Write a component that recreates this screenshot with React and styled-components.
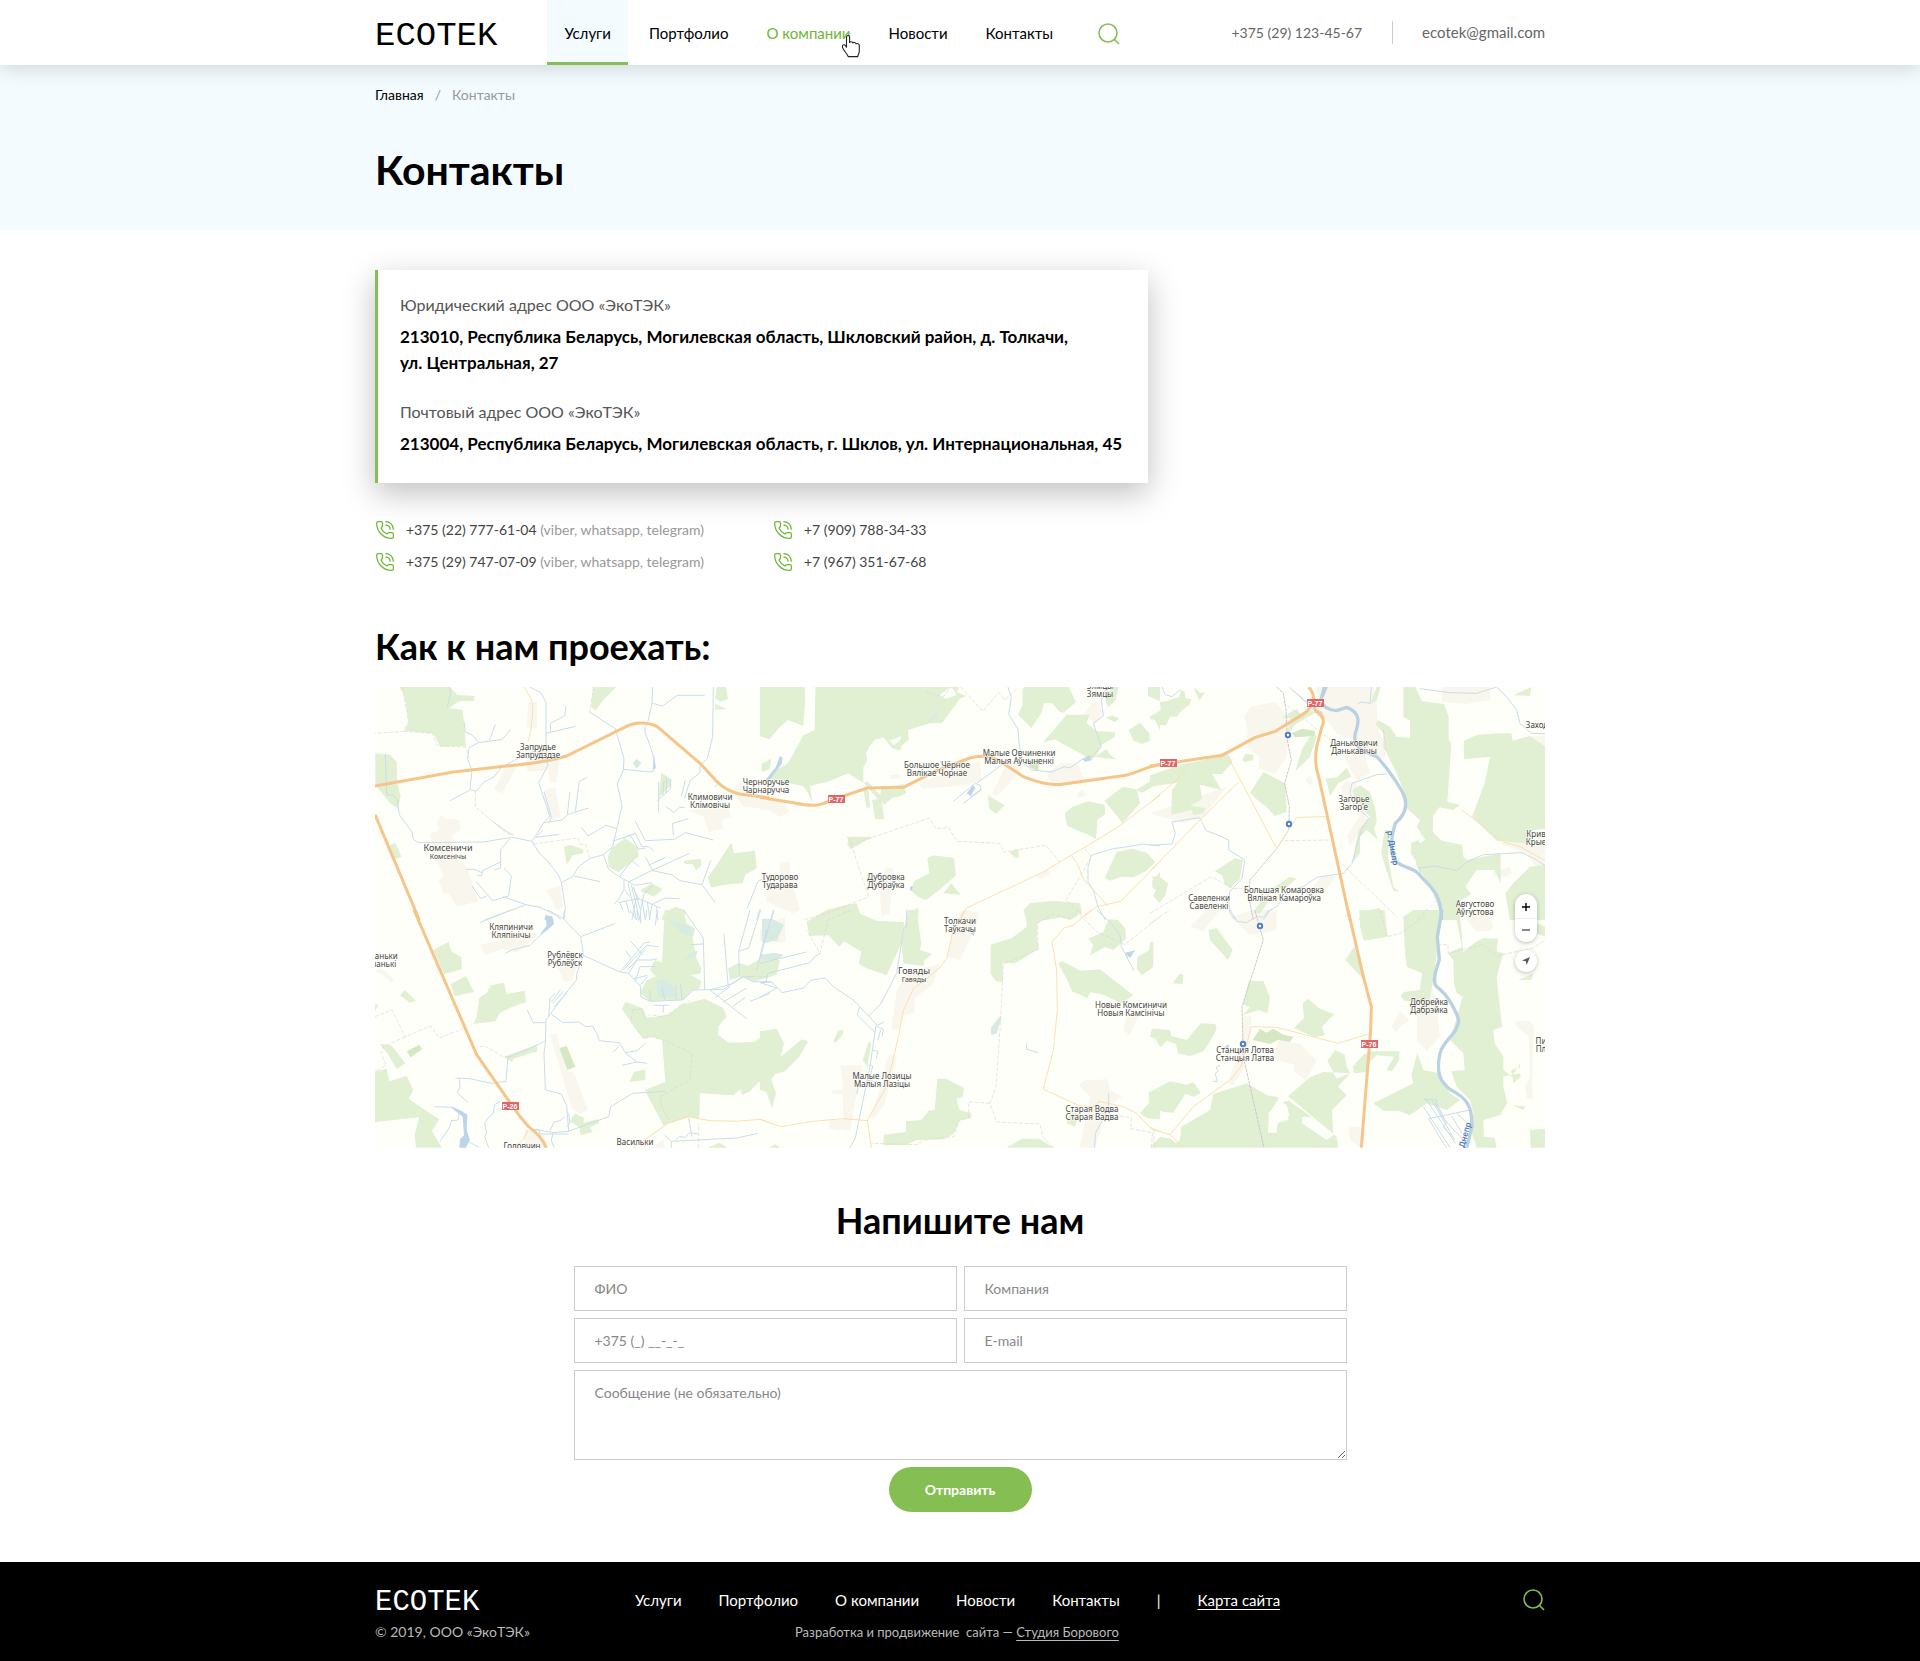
import styled, { createGlobalStyle, css } from "styled-components";
import { PhoneCall } from "lucide-react";

const GlobalStyle = createGlobalStyle`
  body {
    margin: 0;
    font-family: Lato, "Noto Sans", sans-serif;
    font-size: 16px;
    color: #000;
    background-color: #fff;
  }

  * {
    box-sizing: border-box;
  }

  h1, h2, p {
    margin: 0;
  }

  a {
    color: inherit;
    text-decoration: none;
  }
`;

const green = "#85be52";

const Container = styled.div`
  width: 100%;
  max-width: 1210px;
  margin: 0 auto;
  padding: 0 20px;
`;

const Header = styled.header`
  position: relative;
  z-index: 1;
  background-color: #fff;
  box-shadow: 0 4px 18px rgba(0, 0, 0, 0.14);
`;

const HeaderRow = styled(Container)`
  display: flex;
  align-items: center;
  height: 65px;
`;

const Logo = styled.a`
  padding-top: 6px;
  font-family: "Liberation Mono", monospace;
  font-size: ${({ $small }) => ($small ? "29px" : "34px")};
  line-height: 26px;
`;

const MainNav = styled.nav`
  display: flex;
  align-self: stretch;
  gap: 4px;
  margin-left: 50px;
  font-size: 15px;
`;

const NavLink = styled.a`
  position: relative;
  display: flex;
  align-items: center;
  padding: 3px 17px 0;
  border-bottom: 3px solid transparent;
  ${({ $active }) =>
    $active &&
    css`
      background-color: #f3fbff;
      border-color: ${green};
    `}
  ${({ $hovered }) => $hovered && "color: #6fb536;"}
`;

const Pointer = styled.svg`
  position: absolute;
  top: 34px;
  right: 7px;
`;

const IconButton = styled.button`
  display: flex;
  padding: 0;
  border: 0;
  background: none;
  color: ${green};
  cursor: pointer;
`;

const HeaderSearch = styled.div`
  margin: 2px 0 0 28px;
`;

const HeaderContacts = styled.div`
  display: flex;
  align-items: center;
  margin-left: auto;
  font-size: 14px;
  line-height: 23px;
  color: #666;

  a + a {
    margin-left: 30px;
    padding-left: 29px;
    border-left: 1px solid #ccc;
    font-size: 15px;
  }
`;

const Hero = styled.section`
  background-color: #f3fbff;
`;

const HeroInner = styled(Container)`
  padding-top: 20px;
  padding-bottom: 30px;
`;

const Breadcrumbs = styled.nav`
  display: flex;
  gap: 11px;
  font-size: 14px;
  line-height: 20px;

  span {
    color: #999;
  }
`;

const Title = styled.h1`
  margin-top: 35px;
  font-size: 41px;
  line-height: 60px;
  font-weight: 700;
`;

const Subtitle = styled.h2`
  font-size: 36px;
  line-height: 44px;
  font-weight: 700;
`;

const Card = styled.section`
  max-width: 773px;
  margin-top: 40px;
  padding: 22px 22px 26px;
  border-left: 3px solid ${green};
  background-color: #fff;
  box-shadow: 0 10px 30px rgba(0, 0, 0, 0.25);
`;

const Address = styled.div`
  line-height: 26px;

  & + & {
    margin-top: 23px;
  }

  span {
    display: block;
    color: #555;
  }

  p {
    margin-top: 6px;
    font-size: 17px;
    font-weight: 700;
  }
`;

const Phones = styled.ul`
  display: grid;
  grid-template-columns: 398px auto;
  justify-content: start;
  row-gap: 8px;
  margin: 35px 0 0;
  padding: 0;
  list-style: none;

  li {
    display: flex;
    align-items: center;
    gap: 11px;
    font-size: 14px;
    line-height: 24px;
    color: #444;
  }

  svg {
    color: #6fb536;
  }

  span {
    color: #999;
  }
`;

const Route = styled.section`
  margin-top: 50px;
`;

const MapFrame = styled.div`
  position: relative;
  height: 461px;
  margin-top: 19px;
  overflow: hidden;
  background-color: #fffffa;
`;

const MapSvg = styled.svg`
  display: block;
  width: 100%;
  height: 100%;
`;

const MapControls = styled.div`
  position: absolute;
  top: 207px;
  right: 8px;
  display: flex;
  flex-direction: column;
  gap: 8px;
`;

const ControlGroup = styled.div`
  display: flex;
  flex-direction: column;
  width: 22px;
  padding: ${({ $single }) => ($single ? "0" : "2px 0")};
  border-radius: 11px;
  background-color: #fff;
  box-shadow: 0 1px 4px rgba(0, 0, 0, 0.25);

  button {
    display: flex;
    align-items: center;
    justify-content: center;
    height: 22px;
    padding: 0;
    border: 0;
    background: none;
  }

  button + button {
    border-top: 1px solid #eee;
  }
`;

const Feedback = styled.section`
  display: flex;
  flex-direction: column;
  align-items: center;
  margin-top: 50px;
  padding-bottom: 50px;
`;

const Form = styled.form`
  display: grid;
  grid-template-columns: 1fr 1fr;
  gap: 7px;
  justify-items: stretch;
  width: 100%;
  max-width: 773px;
  margin-top: 24px;
`;

const fieldStyle = css`
  width: 100%;
  padding: 0 20px;
  border: 1px solid #ccc;
  border-radius: 0;
  background-color: #fff;
  font-family: inherit;
  font-size: 14px;

  &::placeholder {
    color: #888;
    opacity: 1;
  }
`;

const Field = styled.input`
  ${fieldStyle}
  height: 45px;
`;

const Message = styled.textarea`
  ${fieldStyle}
  display: block;
  grid-column: 1 / -1;
  height: 90px;
  padding-top: 12px;
  line-height: 20px;
  resize: vertical;
`;

const Submit = styled.button`
  grid-column: 1 / -1;
  justify-self: center;
  width: 143px;
  height: 45px;
  border: 0;
  border-radius: 23px;
  background-color: ${green};
  color: #fff;
  font-family: inherit;
  font-size: 14px;
  font-weight: 700;
  cursor: pointer;
`;

const Footer = styled.footer`
  background-color: #000;
  color: #fff;
`;

const FooterGrid = styled(Container)`
  display: grid;
  grid-template-columns: 260px 1fr auto;
  align-items: center;
  row-gap: 4px;
  padding-top: 22px;
  padding-bottom: 18px;
`;

const FooterNav = styled.nav`
  display: flex;
  gap: 37px;
  font-size: 15px;
`;

const Underlined = styled.a`
  text-decoration: underline;
  text-underline-offset: 3px;
`;

const Copyright = styled.p`
  font-size: 14px;
  line-height: 24px;
  color: #bbb;
`;

const Credits = styled(Copyright)`
  padding-left: 160px;
  font-size: 13px;
  white-space: pre;
`;

const SearchIcon = () => (
  <svg width="22" height="22" viewBox="0 0 22 22" fill="none" stroke="currentColor" strokeWidth="1.6">
    <circle cx="10" cy="10" r="9" />
    <path d="M16 16l5 5" />
  </svg>
);

const PointerIcon = () => (
  <Pointer width="20" height="24" viewBox="0 0 20 24" aria-hidden="true">
    <path
      d="M5.5 3.2C5.5 1 8.6 1 8.6 3.2V8.5C9 7.3 11.6 7.5 11.8 9C12.6 8 14.8 8.3 15 9.9C16.2 9.1 18.3 9.6 18.3 11.6V17C18.3 20 16.8 20.5 16.8 22.6H7.2C6.5 20 1.4 15.5 1.4 12.4C1.4 10.4 3.6 10.3 4.4 11.7L5.5 13.2Z"
      fill="#fff"
      stroke="#222"
      strokeWidth="1.1"
      strokeLinejoin="round"
    />
  </Pointer>
);

// Each tile is drawn at three times its size and placed by its top left corner
const tiles = [
  {
    x: -5,
    y: -7,
    wood: "M88 21H240L262 45L314 48L312 62L268 64L236 85L278 90L288 198L210 200L196 170L188 160L104 152L116 128L108 70L100 40Z M16 220L60 224L80 245L82 310L92 350L84 386L60 370L16 314Z M56 498L76 488L94 530L70 540Z M670 21H738L700 60L676 92L664 82Z M1040 21H1068L1074 58L1050 65L1035 55Z M1036 72L1070 86L1036 90Z M1174 272L1200 236V266L1180 276Z M874 278L904 298L902 318L866 352Z M582 500L600 495L640 508V520L608 526L590 554Z M724 505L765 475L802 500L806 530L745 576L716 560L714 530Z M942 542L992 536L994 558L978 570L968 552L944 552Z M1036 560L1084 488L1092 520L1155 512L1160 565L1126 584L1118 610L1080 612L1022 622L1014 592Z M810 632L845 610L878 628L852 650Z M875 720L880 702L915 680L944 690V720Z",
    built: "M475 66H502L500 144H470Z M372 328L410 255L440 262L396 342Z M470 195L540 205L568 250L558 308L538 304L536 270L472 275Z M522 330L556 322L572 410L540 424Z M180 462L206 450L200 430L212 405L226 416L268 420L272 450L248 462L250 530L290 560L326 664L262 680L235 640H220L206 600L220 590L200 540Z M950 390L1075 385L1085 412L1055 420L1060 446L1016 456L1000 410Z M1085 330L1110 306L1160 340L1200 350V388L1120 380Z M526 630L570 618L580 682L560 690L540 650Z",
    water: "M788 250L800 236L814 250L800 266Z",
    lake: "M848 268L852 225L858 265Z M524 712L545 708L550 720H524Z",
    stream: "M238 21L242 40L232 80 M282 124L286 156L308 166L326 188L298 202L292 236L306 270L300 328L318 334L342 306L370 292L395 262L450 232L492 214 M326 188L397 178L422 148 M358 182L376 134 M240 362L300 330 M480 21L512 38L528 66V240L534 256L506 308L540 410L524 424L486 484L508 520L530 540L566 586L574 608L586 682L582 720 M528 160L617 139 M541 156V130L584 108L588 78 M46 224L50 344L70 346L82 360L88 404L126 456L130 478L145 488L340 486L425 472L486 484 M368 425L428 466 M420 476L392 508V546L338 572L334 588L322 586 M290 568L314 568L336 578 M306 618L332 656L350 648 M318 604L368 662L416 648L424 588L402 564 M392 546V564L372 570 M344 720L468 674L400 650 M468 674L510 682L560 706L572 720 M522 336L544 410L538 428 M524 428L576 420L592 404L600 336 M592 404L656 384 M616 394L628 304L652 292 M498 472L568 463 M518 450L498 472 M658 96L736 146L762 236L760 270L742 312L756 378L742 440L728 500L700 524L658 536L626 560L608 590L574 608 M612 588L690 605 M848 21L846 70L834 124L824 142L826 160L840 196L852 236L852 272L842 276L762 268 M846 70L878 78L922 46H1004 M1030 21L1028 170L1012 235L990 258V278L960 302L944 354 M946 300L934 350 M866 306V358L866 398 M862 362L902 326V296 M878 345L882 304 M888 340L890 296 M888 380L912 398L928 382L944 382 M634 442L654 468L708 436L740 446 M795 422L826 482L912 478L946 458L1030 480 M910 466L908 430L956 416 M1042 312L1034 322 M728 484L796 460L816 500L838 500L852 514 M760 476L780 464L806 508L826 504 M700 524L716 568L748 590L794 616L846 608 M776 606L836 576L958 520 M748 590L786 542L808 560 M826 530L848 572L906 584L930 602L996 614L1022 542 M836 556L886 532 M996 614L1036 668 M762 600V628L746 658L734 672 M774 610L800 720 M784 615L810 720 M762 628L780 650 M790 620L812 690L822 640L846 618 M744 668L806 656L872 684 M844 674L886 654L928 656 M798 656L786 720 M816 660L826 720 M832 666L840 720 M846 674L838 720 M860 680L864 720 M790 625L808 660 M750 668L758 690 M768 664L778 700 M1132 684L1164 604L1176 598 M1160 720L1170 688",
    border: "M100 21V40L116 125L100 154L15 160 M100 154L188 160L200 196L288 202L298 235 M670 21L660 96 M316 334V380L410 460L430 465 M490 492L625 474L630 492L648 494L658 534",
    minor: "M462 21C480 50 490 60 488 90C486 130 482 160 474 185",
    main: "M15 318L250 276L390 260C450 254 520 250 590 228L768 140C800 122 840 128 862 140L990 250L1040 304Q1070 334 1110 342L1200 354 M15 404L148 720",
  },
  {
    x: -5,
    y: 223,
    wood: "M190 120L236 95L244 124L274 142L275 178L222 192Z M242 222L288 198L312 246L254 258Z M90 256L104 240L138 272L120 278Z M328 264L350 248L364 226L402 218L410 252L464 242L468 276L424 292L390 308L376 334L310 342L320 320Z M15 282L26 284L15 304Z M30 402L64 406L106 460L80 478L56 436Z M15 484L50 476L58 514L110 498L130 540L116 566L150 590L208 628L186 664L216 713H138L134 674L148 622L15 636Z M402 440L500 404L502 424L430 446L426 456L416 450Z M600 634L616 610L642 624L640 638L684 628L688 638L660 652L668 666L632 676L628 652Z M778 516L792 486L826 478V510Z M884 0H940L950 40L976 56L968 84L978 140L994 176L990 192L962 194L994 214L990 234L960 246L940 270H890L840 274L810 250L830 210L858 200L840 180L854 150L876 158Z M1074 176L1106 158L1134 168L1170 146H1200V200L1150 216L1120 198L1080 210Z M756 298L766 276L790 284L820 296L830 324L894 314L934 284L1004 266L1060 294L1070 320L1046 348L1044 374L1076 398L1150 396L1200 366V520L1166 516L1140 544L1116 556L1112 538L1090 556L990 550L988 626L960 620L900 640L880 646L824 540L886 516L876 390L846 380L820 386Z M1176 516L1200 510V556Z M1012 713L1050 698L1072 713Z",
    shade: "M110 424L148 404L156 418L122 442Z M568 414L590 408L616 470L592 480Z",
    built: "M330 104L500 68L500 80L440 128L400 116L345 136Z M562 170L622 166L606 210L584 216Z M15 184L30 174L44 182L72 208L64 218L40 196Z M540 374L560 370L570 410L590 480L612 490L654 600L630 612L606 596Z M464 656L520 670L536 713H464Z M845 713L880 688L884 713Z",
    water: "M894 28L960 50L970 80L940 72Z M942 152L962 128L982 122L980 136Z M860 210L880 208L912 230V262H864Z M1176 26H1200V96L1178 100Z",
    lake: "M526 14L548 22L552 42L532 60L510 74L530 46Z M240 590L270 600L292 614L290 660L300 690L288 713H268L270 688L282 676L278 620Z",
    stream: "M330 38L424 0 M534 0L580 26 M584 0L580 26L632 80L638 116L640 136L620 190V210L590 246L528 330L526 400L522 430L526 540L574 552L590 586L596 664L550 668L506 660L488 660 M632 80L706 52L736 40 M406 130L426 120L480 106L500 86L530 60 M640 136L750 186L776 190L812 230V260L840 274L938 270L970 240L1060 238L1114 202L1150 200 M1020 240L1090 220L1120 200L1150 216L1200 214 M1020 240L1130 326 M1036 262L1080 230 M1060 276L1130 234 M1090 288L1126 262 M1140 274L1200 250 M940 0L1000 84L1004 240 M962 104L1000 102 M1062 72L1074 222 M1140 0L1106 124L1108 196 M1172 0L1136 114L1106 124 M1190 60L1160 180 M780 92L818 134 M768 122L784 146 M750 186L824 98L840 96 M760 180L830 106L866 110 M776 190L814 130L826 118 M796 214L810 170L856 170 M772 180L800 150L846 150L862 146 M812 224L832 200 M790 206L832 196 M580 244L548 280 M572 238L544 276 M590 250L552 290 M536 320L540 264L556 250 M528 338H490L472 300 M544 312L578 338L626 336L648 350L668 348L684 378L688 392L748 398L766 428L802 422L828 398 M766 428L800 456L832 460 M748 408L730 426 M800 456L756 466 M840 270V242 M880 288V308 M850 286H896 M884 270L876 230 M918 270V226 M936 270L932 222 M256 504L300 506L364 520L408 514L414 442L470 420L524 394 M268 506L270 530L262 548L294 578 M194 590L250 592L272 604 M268 604L264 630L244 632L240 650L210 694 M390 574L374 584L370 610L354 624L344 640L350 670L344 680L356 713 M298 696L328 713 M596 664L660 640L716 620L722 590L788 550L886 544 M590 650L600 640L596 610 M584 620L570 632L552 636L540 662 M550 668L544 690L552 713 M486 660L506 658L510 672H596 M956 624L966 680 M904 694L884 676 M904 694V713 M904 694L1100 684L1164 670 M916 690L928 680L946 682L958 668L984 672 M780 0L800 30 M800 0L806 34 M812 0V40 M862 0L856 46 M830 0L828 24",
    border: "M15 320L66 300L106 380L182 348L208 384L280 356 M106 380L40 410L34 430L48 466L15 484 M312 412L346 408L402 442L420 438 M788 300L814 296L824 326L840 314L876 320L894 314L934 284L960 272 M788 300L782 336L820 384L846 380L886 392L966 430L960 510L870 560L876 594L896 630 M986 713V640 M1114 200H1200",
    minor: "M474 660L460 690L428 713 M790 713L900 636L956 620L1020 632L1100 634L1170 628L1200 638",
    main: "M132 0L320 434L430 592Q450 622 476 650C500 668 520 690 528 713",
  },
  {
    x: 385,
    y: -7,
    wood: "M0 21H134L136 56L130 138L84 120L60 140L28 178L0 168Z M166 21H598L590 36L618 48L600 56L546 130L510 130L444 150L446 180L426 196L420 212L396 204L370 172L344 180L328 200L318 220L322 242L310 262V308L264 280L208 304L150 318L158 368L144 340L130 318L86 310L48 300L24 296L44 272L84 250L108 206L130 166L164 150Z M312 310L322 304L364 350L372 418H346L336 360L354 358Z M310 328L320 384L330 382L326 332Z M364 322L432 312L438 340L414 352L400 352L372 374L360 350Z M6 250L34 236L32 256L12 276L4 270Z M266 470L338 470L272 508L262 494Z M684 346L734 376L708 402L688 386Z M502 534L520 526L582 534L588 586L538 630L498 660L474 650L454 632L462 604L508 580Z M550 640L574 610L602 644Z M246 652L256 676L290 670L306 720H150L200 690L256 676Z M444 700L474 684L474 720H444Z M788 30L792 21H926L948 66L910 98L900 96L876 70H852L844 100L814 144L774 104L788 76Z M920 104L988 104L980 130L1010 154L1066 156L1064 170L1024 196L1010 224L990 246L972 226L920 198L884 178L848 188Z M1004 230L1040 208L1050 224L1070 238L1046 236Z M1034 54L1058 21H1076L1066 62L1044 82Z M1164 21H1200V64L1164 48Z M1106 150L1140 128L1168 160L1170 182L1146 192L1120 182Z M1186 122L1200 112V150Z M914 400L938 380L984 364L1034 374L1036 402L1012 420L1008 478L988 466L922 438Z M1034 362L1088 320L1130 328L1140 370L1088 430Z M1128 330L1200 286V308L1146 338Z M748 516L776 508V534L764 532Z M790 690L810 670L880 662L960 670L966 700L860 720H800Z M1034 594L1070 516L1118 506L1160 518L1186 546L1160 572L1120 592L1084 590L1050 602Z M1176 604L1200 576V636L1178 624Z M1038 114L1056 106L1078 116L1064 126Z",
    clear: "M390 182L424 168L420 182L400 196Z M536 46L574 21L590 44L560 56Z",
    shade: "M806 240L840 236L834 272L808 262Z",
    built: "M476 310L540 286L660 242L664 300L620 316L490 326Z M740 250L800 250L720 340L708 350L696 340Z M860 280L900 250L950 250L980 306L900 318L870 306Z M0 345L70 360L90 394L60 412L24 390L0 388Z M58 550L88 544L94 602L112 660L120 690L98 700L40 676L20 664L24 610L60 600Z M374 566L400 562L390 700L364 710L360 640Z M828 590L862 566L872 584L840 598Z M970 104L1004 60L1024 80L1020 120L1004 130Z M950 340L970 328L976 348L956 354Z M388 286L422 282L418 298H392Z M596 696L620 690L660 700L640 720H600Z",
    water: "M504 122L534 94L530 108L514 126Z",
    lake: "M620 340L640 316L646 324L632 348Z M60 228L68 234L66 250L40 286L24 306L18 298L48 260Z M450 620L458 618L456 632L450 630Z M968 236L990 226L992 240L976 246Z",
    stream: "M744 21L754 54L746 102L774 148L778 200L790 250L816 270L876 276L912 260L930 264L966 238L990 236L1024 200L1012 164L1000 130L1030 108L1024 60L1040 21 M580 364L646 310L660 316L664 330L610 370 M650 310L732 250 M630 352L664 328 M1200 498L1150 492L1104 500L1060 506L1020 518L994 526L984 560V606L1000 630L1014 680L1036 720 M34 720L42 692",
    border: "M498 36L550 50L574 21 M602 21L668 94L716 38L734 60L770 28 M274 494L508 414L528 446L566 442L590 484L720 490L730 516L858 496L900 546 M274 494L326 650L200 700L130 720 M974 506L994 530L918 660L980 716 M262 470L274 494",
    minor: "M600 720L620 684L850 576L1070 444L1200 346 M934 526L952 552L972 600L1044 678 M1200 544L1082 664L1010 680L958 720",
    main: "M0 352L100 368C160 380 180 378 210 362L322 324L430 322L530 272L630 234C670 222 700 232 720 244L790 290C850 314 880 316 912 312L1098 286C1150 270 1170 256 1200 254",
  },
  {
    x: 385,
    y: 223,
    wood: "M140 34L238 0H274L350 32L432 36L424 100L380 196L318 174L296 162L304 126L252 94L238 110L206 76L148 78Z M444 0H476L474 34L484 100L480 120L516 132L494 150L490 168L430 160L424 100Z M796 0H964L950 20L930 30L878 14L832 40L830 80L836 116L766 160L728 158V216L708 214L692 192V104L756 84L800 50Z M0 152L60 150L50 194L0 210Z M0 364L50 356L72 400L62 440L126 388L144 394L118 440L74 484L46 492L34 508L48 550L36 596L20 546L0 540Z M220 394L234 362L250 360L248 376L226 398Z M326 396L334 400L322 472L308 450Z M532 506L558 506L612 534L608 560L590 568L598 600L634 610L634 624L600 630L580 672L550 688L470 690L440 704L370 706L372 674L438 666V634L484 630L506 602L524 600Z M740 713L786 686H838L880 713Z M30 713L44 702L62 713Z M894 160L908 154L960 182L1020 178L1120 256L1084 280L1034 256L992 246L982 264L936 244L920 206Z M984 86L1030 66L1046 28L1074 30L1096 56L1098 86L1060 120L1034 112L990 136L1000 104Z M1132 140L1166 122L1172 94L1180 170L1146 196L1130 176Z M920 640L930 606L958 612L944 650Z M1140 610L1166 580V546L1200 548V628L1160 624Z M1174 362L1200 356V408L1186 382Z",
    built: "M590 30L610 0L656 14L650 46L600 150L564 140L574 80Z M410 240L440 190L540 160L520 220L464 266V310L430 316L416 360L394 356Z M240 466L306 466L308 500L290 550L270 664L206 656L210 630H250L248 554L216 550V542L250 538Z M384 436L412 436L374 580L346 620L328 628L366 520Z M956 524L976 510L1044 508L1050 540L1086 560L1060 580L1030 600L1020 670L1004 713H960L976 626L990 560Z M1090 360L1100 320L1136 318L1108 378Z M20 40L76 20L76 96L0 94V60Z",
    water: "M692 354L722 316L724 326L710 370L694 376Z M6 40L34 26L72 44L50 92L6 94Z M0 134L44 128L72 134L50 150L0 150Z",
    lake: "M1096 130L1126 120L1110 144Z M630 68L646 66L640 78Z",
    stream: "M40 0L0 146 M0 160L140 126 M0 218L50 234L0 262 M66 248L36 216L0 218 M18 216L24 190L150 158L164 140L180 130 M66 248L130 234L154 210L196 204L220 230L280 270L352 346L372 336 M298 292L292 314L344 366 M326 318L362 282L410 190L432 50L440 50 M352 350L370 358L366 380 M362 360L354 390 M348 346L330 470L286 684L270 713 M336 420L354 424L348 448 M326 464L338 468L330 500 M300 510L290 552 M318 510L352 516 M440 0V50 M800 400V418L834 428 M1010 0L1054 40L1080 76L1084 110L1104 148L1122 182 M1104 148L1098 128L1120 126 M1046 550V596L1006 670L1004 713",
    border: "M274 0L204 30L180 130L140 60 M958 0L930 26L880 12L832 40L834 118L730 162L722 330L708 530L690 580L710 636L840 642L848 680L880 713 M690 580L626 576L626 624L596 632L582 680L490 690L470 704L334 700 M958 14L1010 64L1094 104L1200 20 M1012 610L1114 622L1112 656L1178 668L1174 713",
    minor: "M614 0L580 60L560 146L540 172L500 206L460 236L430 302L418 368L392 480L376 536L322 630L334 713 M0 628L62 650L160 634L248 626L322 632 M992 0L940 46L912 54L876 96L890 180L892 300L880 420L850 538L960 588L1008 590L1016 574L1090 590L1130 610L1170 652L1200 664",
    main: "",
  },
  {
    x: 775,
    y: -7,
    wood: "M0 110L32 90L30 66L50 64L88 50L92 28L104 36L106 54L124 58L118 74L90 96L82 110H60L48 136L28 134L20 120L0 118Z M130 21L152 40L166 36L148 62Z M0 286L100 252L122 248L196 232L228 214L248 246L216 282H186L214 330L150 314L156 358L120 378L166 384L160 400L130 406L124 390L64 404L66 330L82 308L0 320Z M276 240L286 222L310 224V240L286 246Z M300 338L340 276L374 294L406 310L410 396L374 408L350 380L326 364Z M6 590L26 588L54 610L48 642L28 670L10 648L20 624Z M194 574L256 534L278 540L270 596L242 624L224 612L216 586Z M412 168L420 114L396 112L440 86L450 100L474 90L500 96L434 134Z M436 274L456 208L490 152L500 170L480 230Z M526 296L560 292L590 264L604 290L566 308L540 348L532 312Z M608 330L630 316L660 336L676 386L680 426L672 446L684 480L650 450L630 470V520L606 550L626 450L660 410L620 370Z M680 21H692L680 62L660 72Z M760 21H796L810 50L816 64L882 72L896 110V180L904 190L892 366L930 374L910 390L868 382L850 408L848 456L876 482L936 494L940 530L952 540L1052 520V610L1034 570H980L946 620L964 642L930 664L926 720H880L840 616L800 560L790 500L826 480L800 440L810 420L772 386L760 330L740 280L700 200V160L676 132L684 120L720 140L740 170L780 174V122L760 110Z M784 488L806 480L812 528L796 540L782 520Z M704 450L718 452L714 530L730 620L748 636L730 632L706 560L694 520Z M942 182L982 164L1048 160H1084L1088 182L1140 168L1200 210V446L1150 450L1130 490L1040 482L966 410L1004 310L1020 230L942 238Z M1090 46L1144 21L1140 48Z M1090 610L1140 560L1200 552V720H1080L1066 640Z M630 712L660 690L690 684L694 720H626Z M370 624L420 590L440 596L410 620L368 632L356 640L352 670L330 700L312 700L320 680Z",
    shade: "M426 160L456 146L494 152L492 168L434 172Z",
    built: "M282 110L300 80L376 66L420 120L410 230L376 280L326 266L328 230L288 200L290 140Z M500 21L670 21L680 70L684 150L706 200L696 238L650 224L610 180L560 160L512 100Z M570 210L600 230L640 210L660 280L620 302Z M590 300L620 310L620 360L580 370L574 320Z M876 21H1020V60L950 72L876 66Z M1136 170L1200 166V260L1156 262V206L1134 196Z M1056 494L1060 480L1200 480V560L1160 566L1130 520Z M466 296L482 286L488 310L476 318Z M466 640L500 610L510 590L560 588L520 640L486 660Z M1030 574L1080 560L1086 580L1070 590L1030 588Z M0 400L230 320L160 410L100 430Z M640 390L650 420L600 500L590 470Z",
    water: "",
    lake: "M518 21H534L522 50L510 58Z",
    stream: "M36 21L46 44L66 50L90 30 M0 496L66 492L76 460L66 426L140 414L150 414L168 452L196 462L236 480V510L284 540L276 596L240 634L236 660L240 700L256 720 M418 21L460 60L520 120 M426 30L474 68L520 100 M664 21L660 70L634 66L624 72 M600 338L606 310L680 284L710 282 M600 338L612 376L656 414L634 450L606 550L580 580L500 592L460 620L420 630L380 680L360 690L340 720 M810 26L900 38L980 40L1040 21L1070 50L1100 90L1110 130L1144 160L1200 162 M816 594L806 564L856 558L920 572L950 546L1000 524L1116 518L1160 540L1200 566",
    border: "M400 66L540 180 M404 482L540 480 M564 542L652 624L740 710 M0 700L184 590L250 626H330 M700 150L708 200L700 236 M860 660L800 720",
    rail: "M380 21L400 40L408 90L412 180L424 240L404 310L418 380L416 450L380 506L300 600L296 650L310 720",
    minor: "M230 230L250 260L380 506L440 412L528 410 M0 368L80 300L120 250 M0 574L150 420L266 306 M936 390L1000 440L1060 486L1110 500L1200 550",
    river: "M524 21L512 60Q522 90 560 92L590 82C640 100 622 140 616 160C604 210 660 220 680 230C710 260 750 320 760 342Q782 390 736 430C730 450 716 500 730 530C740 560 780 560 800 576C840 620 876 640 874 720",
    main: "M476 21Q510 60 464 100L376 154L316 172L216 226L0 258 M490 60L496 92Q530 110 516 140L500 200Q492 250 506 290L600 720",
  },
  {
    x: 775,
    y: 223,
    wood: "M0 96L10 96L10 160L0 180Z M176 60L200 54L248 120L234 150L180 90Z M68 220L90 190L100 196L98 222Z M6 356L60 360L64 378L110 390L152 340L196 342L200 358L178 398L160 424L120 438L84 430L78 402L50 392L32 412L14 384L0 380Z M278 316L300 290L280 284L296 214L340 212L360 262L352 310L326 300Z M458 280L474 266L510 296L552 312L516 350L524 376L494 382L432 354L462 324Z M532 452L556 420L584 434L590 470L600 490L560 506Z M0 546L60 514L110 524L130 516L152 548L132 560L106 552L70 608L40 606L0 590Z M190 552L290 520L352 556L386 562L380 576L358 610L354 668H380L382 640L416 628L400 576L416 572L486 622L456 620V640L530 690L550 676L546 600L590 556L564 530L600 490L520 486L480 502L414 558L560 680L566 713H60L90 690L94 650L180 600Z M586 150L612 110L640 180L648 216Z M628 0H704L712 80L642 92L630 50Z M760 20L790 0H876L870 60L862 120L850 210L836 280L764 272L752 258L762 246L810 240L816 190L770 170L764 110Z M608 470L640 434L660 424L748 424V450L726 484L710 480L732 440L680 436L662 452L652 486L612 490Z M670 580L790 520L784 496L802 430L820 480L870 490L900 550L930 570L890 600L830 580L780 616L750 604L700 602Z M914 0L936 110L894 130L910 150L912 220L920 250L938 260L900 390L940 430L944 480L904 484L920 530L960 570L970 610L962 660L980 713H1040L1034 684L1002 680L1000 630L1050 616L1072 580L1060 530V500L1110 490V460L1086 500L1060 480V440L1034 400L1030 360L1056 350L1040 200L1060 130L1040 124L1044 86L1000 84L972 100L940 126L930 20L970 0Z M1084 480L1108 470L1112 500L1090 520Z M1104 210L1150 190L1144 210Z M1140 660L1200 656V713H1142Z M1088 586L1128 590L1118 600Z M1160 40L1200 56V86L1160 70Z M0 713L30 680L62 686L96 713Z",
    clear: "M384 580L410 584L418 618L384 634L380 660L356 666V610Z",
    shade: "M308 390L330 356L350 368L370 356L400 374L430 380L420 396L384 390L360 402Z",
    built: "M278 320L304 316L300 400L280 480L250 524L234 520L260 440L274 400Z M384 392L448 400L500 452L466 514L430 480L434 464L370 448Z M724 350L750 304L780 330L750 350L740 368Z M800 300L840 220L858 262L870 380L830 424L800 390Z M1094 334L1140 332L1152 350L1146 520L1150 570L1130 566L1124 530L1140 500L1136 380L1100 350Z M596 650L634 650L630 713L600 690Z M120 50L170 0H210L160 64Z M240 20L310 0H380V60L300 76Z M930 0H1020L1030 60L980 66Z M120 690L150 664L190 660L188 690Z",
    water: "",
    lake: "M222 412L236 402L236 418L224 418Z",
    stream: "M240 0L262 34L290 38L320 20L340 22L356 0 M210 466L198 472L204 484L196 490L198 500L202 514L190 514 M820 568L862 570L856 580L880 625 M820 590L900 713 M830 570L916 700 M846 572L914 690 M836 626L960 600 M880 626L950 700 M836 626L880 700L890 713 M904 616L936 670 M920 610L952 640 M860 580L890 640L880 650L906 680",
    border: "M690 0L712 80L750 70L830 14 M862 104H894V130L1000 104L1040 138L1150 114L1200 80 M0 40L60 0 M12 660V713",
    rail: "M314 0L340 90L276 290L280 440L342 713",
    minor: "M0 656L60 674L100 713 M60 674L130 590L240 510L274 468L280 440L304 350L380 352L564 400L656 372",
    river: "M876 0L862 80L868 150C850 200 850 220 860 230C900 260 920 310 926 330C926 370 880 390 870 430C854 500 880 530 920 550C970 580 964 620 966 650L950 713",
    main: "M594 0L640 200L664 290L662 360L634 713",
  },
];

const layers = [
  { key: "built", fill: "#f9f6ee" },
  { key: "wood", fill: "#e1efd2" },
  { key: "clear", fill: "#fffffa" },
  { key: "shade", fill: "#d5e7c3" },
  { key: "water", fill: "#d8eae4" },
  { key: "lake", fill: "#bcd6e8" },
  { key: "stream", stroke: "#c9dde9", width: 3 },
  { key: "border", stroke: "#dcd6d2", width: 2, dash: "12 5" },
  { key: "river", stroke: "#b9d2e2", width: 10 },
  { key: "rail", stroke: "#c9c9c9", width: 3, dash: "10 2" },
  { key: "minor", stroke: "#fae0b3", width: 3 },
  { key: "main", stroke: "#f5c58a", width: 9 },
];

const places = [
  [163, 63, "Запрудье", "Запрудздзе"],
  [73, 164, "Комсеничи", "Комсенічы", 9],
  [335, 113, "Климовичи", "Клімовічы"],
  [391, 98, "Черноручье", "Чарнаручча"],
  [562, 81, "Большое Чёрное", "Вялікае Чорнае"],
  [644, 69, "Малые Овчиненки", "Малыя Аўчыненкі"],
  [725, 2, "Зямцы", "Зямцы"],
  [405, 193, "Тудорово", "Тударава"],
  [511, 193, "Дубровка", "Дубраўка"],
  [585, 237, "Толкачи", "Таўкачы"],
  [136, 243, "Кляпиничи", "Кляпінічы"],
  [190, 271, "Рублёвск", "Рублёўск"],
  [539, 287, "Говяды", "Гавяды", 9],
  [507, 392, "Малые Лозицы", "Малыя Лазіцы"],
  [717, 425, "Старая Водва", "Старая Вадва"],
  [756, 321, "Новые Комсиничи", "Новыя Камсінічы"],
  [834, 214, "Савеленки", "Савеленкі"],
  [909, 206, "Большая Комаровка", "Вялікая Камароўка"],
  [979, 59, "Даньковичи", "Данькавічы"],
  [979, 115, "Загорье", "Загор’е"],
  [1100, 220, "Августово", "Аўгустова"],
  [1054, 318, "Добрейка", "Дабрэйка"],
  [870, 366, "Станция Лотва", "Станцыя Латва"],
  [147, 462, "Головчин", ""],
  [260, 458, "Васильки", ""],
  [9, 272, "ваньки", "ванькі"],
  [1162, 41, "Заход", ""],
  [1161, 150, "Крив", "Крые"],
  [1166, 357, "Пи", "Пл"],
];

const shields = [
  [461, 112, "Р-77"],
  [793, 76, "Р-77"],
  [940, 16, "Р-77"],
  [135, 419, "Р-26"],
  [994, 357, "Р-76"],
];

const stations = [
  [913, 48],
  [914, 137],
  [885, 239],
  [868, 357],
];

const RegionMap = () => (
  <MapSvg viewBox="0 0 1170 461" preserveAspectRatio="xMidYMid slice" role="img" aria-label="Карта проезда">
    {layers.map(({ key, fill, stroke, width, dash }) =>
      tiles.map((tile) => (
        <g key={key + tile.x + tile.y} transform={`translate(${tile.x} ${tile.y}) scale(0.33333)`}>
          <path
            d={tile[key] || ""}
            fill={fill || "none"}
            stroke={stroke}
            strokeWidth={width}
            strokeDasharray={dash}
            strokeLinejoin="round"
          />
        </g>
      ))
    )}
    <g fill="#fff" stroke="#4f7fce" strokeWidth="2">
      {stations.map(([x, y]) => (
        <circle key={y} cx={x} cy={y} r="2.2" />
      ))}
    </g>
    <g
      fill="#444"
      stroke="#fffffa"
      strokeWidth="1"
      paintOrder="stroke"
      textAnchor="middle"
      fontFamily='"Noto Sans", sans-serif'
    >
      {places.map(([x, y, ru, by, size]) => (
        <text key={ru} x={x} y={y} fontSize={size || 8}>
          {ru}
          <tspan x={x} dy="8" fontSize={size ? 7 : 8}>
            {by}
          </tspan>
        </text>
      ))}
    </g>
    <g textAnchor="middle" fontFamily='"Liberation Sans", sans-serif' fontSize="7" fontWeight="700">
      {shields.map(([x, y, name]) => (
        <g key={x}>
          <rect x={x - 8} y={y - 4} width="17" height="8" fill="#de6669" />
          <text x={x} y={y + 3} fill="#fff">
            {name}
          </text>
        </g>
      ))}
    </g>
    <g fill="#4a77b8" fontFamily='"Noto Sans", sans-serif' fontSize="8" fontWeight="600">
      <text transform="translate(1012 144) rotate(80)">р. Днепр</text>
      <text transform="translate(1089 461) rotate(-74)">Днепр</text>
    </g>
  </MapSvg>
);

const pages = ["Услуги", "Портфолио", "О компании", "Новости", "Контакты"];

const phones = [
  ["+375 (22) 777-61-04", "(viber, whatsapp, telegram)"],
  ["+7 (909) 788-34-33"],
  ["+375 (29) 747-07-09", "(viber, whatsapp, telegram)"],
  ["+7 (967) 351-67-68"],
];

const App = () => {
  return (
    <>
      <GlobalStyle />
      <Header>
        <HeaderRow>
          <Logo href="#">ECOTEK</Logo>
          <MainNav>
            {pages.map((page) => (
              <NavLink key={page} href="#" $active={page === "Услуги"} $hovered={page === "О компании"}>
                {page}
                {page === "О компании" && <PointerIcon />}
              </NavLink>
            ))}
          </MainNav>
          <HeaderSearch>
            <IconButton aria-label="Поиск">
              <SearchIcon />
            </IconButton>
          </HeaderSearch>
          <HeaderContacts>
            <a href="tel:+375291234567">+375 (29) 123-45-67</a>
            <a href="mailto:ecotek@gmail.com">ecotek@gmail.com</a>
          </HeaderContacts>
        </HeaderRow>
      </Header>

      <Hero>
        <HeroInner>
          <Breadcrumbs>
            <a href="#">Главная</a>
            <span>/</span>
            <span>Контакты</span>
          </Breadcrumbs>
          <Title>Контакты</Title>
        </HeroInner>
      </Hero>

      <Container as="main">
        <Card>
          <Address>
            <span>Юридический адрес ООО «ЭкоТЭК»</span>
            <p>
              213010, Республика Беларусь, Могилевская область, Шкловский район, д. Толкачи,
              <br />
              ул. Центральная, 27
            </p>
          </Address>
          <Address>
            <span>Почтовый адрес ООО «ЭкоТЭК»</span>
            <p>213004, Республика Беларусь, Могилевская область, г. Шклов, ул. Интернациональная, 45</p>
          </Address>
        </Card>

        <Phones>
          {phones.map(([phone, note]) => (
            <li key={phone}>
              <PhoneCall size={20} strokeWidth={1.5} />
              <div>
                {phone} {note && <span>{note}</span>}
              </div>
            </li>
          ))}
        </Phones>

        <Route>
          <Subtitle>Как к нам проехать:</Subtitle>
          <MapFrame>
            <RegionMap />
            <MapControls>
              <ControlGroup>
                <button aria-label="Приблизить">
                  <svg width="8" height="8" stroke="#000" strokeWidth="1.4">
                    <path d="M0 4h8M4 0v8" />
                  </svg>
                </button>
                <button aria-label="Отдалить">
                  <svg width="8" height="8" stroke="#555" strokeWidth="1.4">
                    <path d="M0 4h8" />
                  </svg>
                </button>
              </ControlGroup>
              <ControlGroup $single>
                <button aria-label="Моё местоположение">
                  <svg width="8" height="8" fill="#555">
                    <path d="M0 3.6L8 0L4.6 8L3.9 4.2Z" />
                  </svg>
                </button>
              </ControlGroup>
            </MapControls>
          </MapFrame>
        </Route>

        <Feedback>
          <Subtitle>Напишите нам</Subtitle>
          <Form>
            <Field type="text" aria-label="ФИО" placeholder="ФИО" />
            <Field type="text" aria-label="Компания" placeholder="Компания" />
            <Field type="tel" aria-label="Телефон" placeholder="+375 (_) __-_-_" />
            <Field type="email" aria-label="E-mail" placeholder="E-mail" />
            <Message aria-label="Сообщение" placeholder="Сообщение (не обязательно)" />
            <Submit type="submit">Отправить</Submit>
          </Form>
        </Feedback>
      </Container>

      <Footer>
        <FooterGrid>
          <Logo href="#" $small>
            ECOTEK
          </Logo>
          <FooterNav>
            {pages.map((page) => (
              <a key={page} href="#">
                {page}
              </a>
            ))}
            <span>|</span>
            <Underlined href="#">Карта сайта</Underlined>
          </FooterNav>
          <IconButton aria-label="Поиск">
            <SearchIcon />
          </IconButton>
          <Copyright>© 2019, ООО «ЭкоТЭК»</Copyright>
          <Credits>
            {"Разработка и продвижение  сайта — "}
            <Underlined href="#">Студия Борового</Underlined>
          </Credits>
        </FooterGrid>
      </Footer>
    </>
  );
};

export default App;
